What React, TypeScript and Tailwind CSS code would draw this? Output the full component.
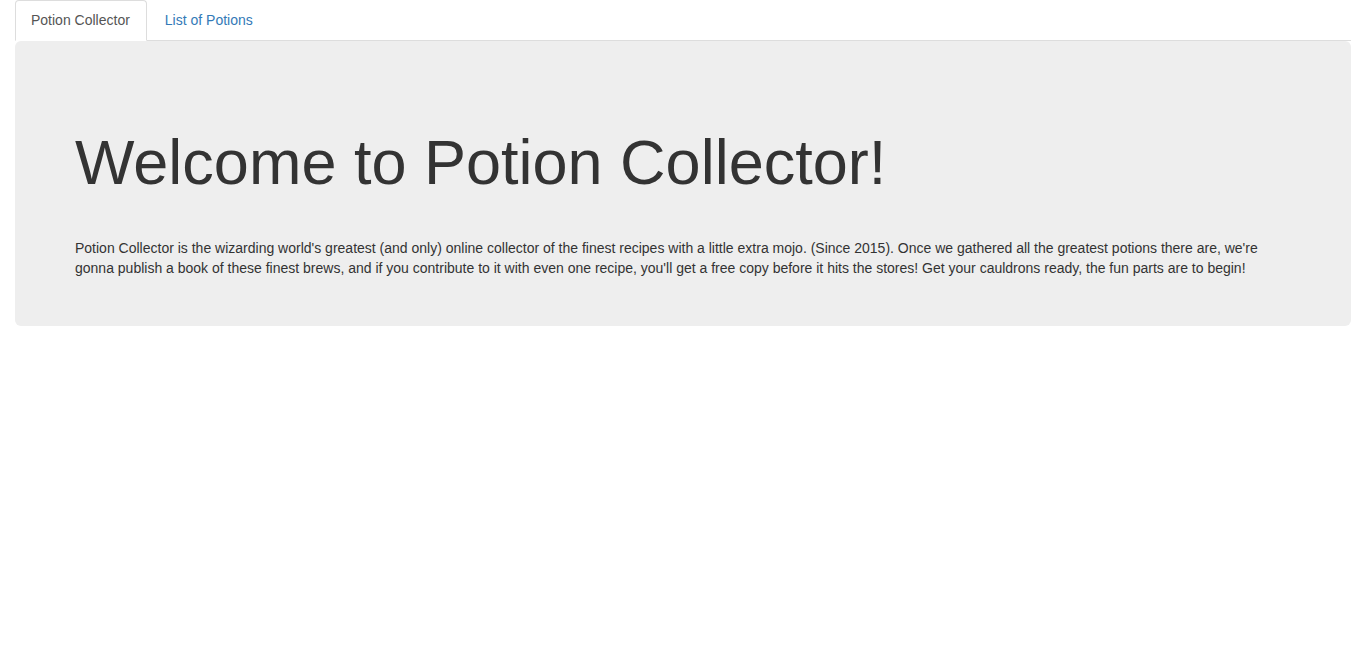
export default function App() {
  return (
    <div className="min-h-[654px] bg-white px-[15px] text-[14px] leading-[20px] text-[#333]" style={{ fontFamily: '"Liberation Sans", Arial, Helvetica, sans-serif' }}>
      <ul className="flex border-b border-[#ddd]">
        <li className="-mb-px mr-[2px]">
          <a className="block rounded-t-[4px] border border-[#ddd] border-b-transparent bg-white pb-[10px] pl-[15px] pr-[16px] pt-[9px] text-[#555]">
            Potion Collector
          </a>
        </li>
        <li className="-mb-px mr-[2px]">
          <a className="block rounded-t-[4px] border border-transparent pb-[10px] pl-[15px] pr-[16px] pt-[9px] text-[#337ab7] hover:bg-[#eee]">
            List of Potions
          </a>
        </li>
      </ul>
      <div className="rounded-[6px] bg-[#eee] px-[60px] pb-[48px] pt-[87px]">
        <h1 className="m-0 text-[63px] leading-[1.1] text-[#333]">Welcome to Potion Collector!</h1>
        <p className="mt-[41px]">
          Potion Collector is the wizarding world's greatest (and only) online collector of the finest recipes with a little extra mojo. (Since 2015). Once we gathered all the greatest potions there are, we're gonna publish a book of these finest brews, and if you contribute to it with even one recipe, you'll get a free copy before it hits the stores! Get your cauldrons ready, the fun parts are to begin!
        </p>
      </div>
    </div>
  );
}
